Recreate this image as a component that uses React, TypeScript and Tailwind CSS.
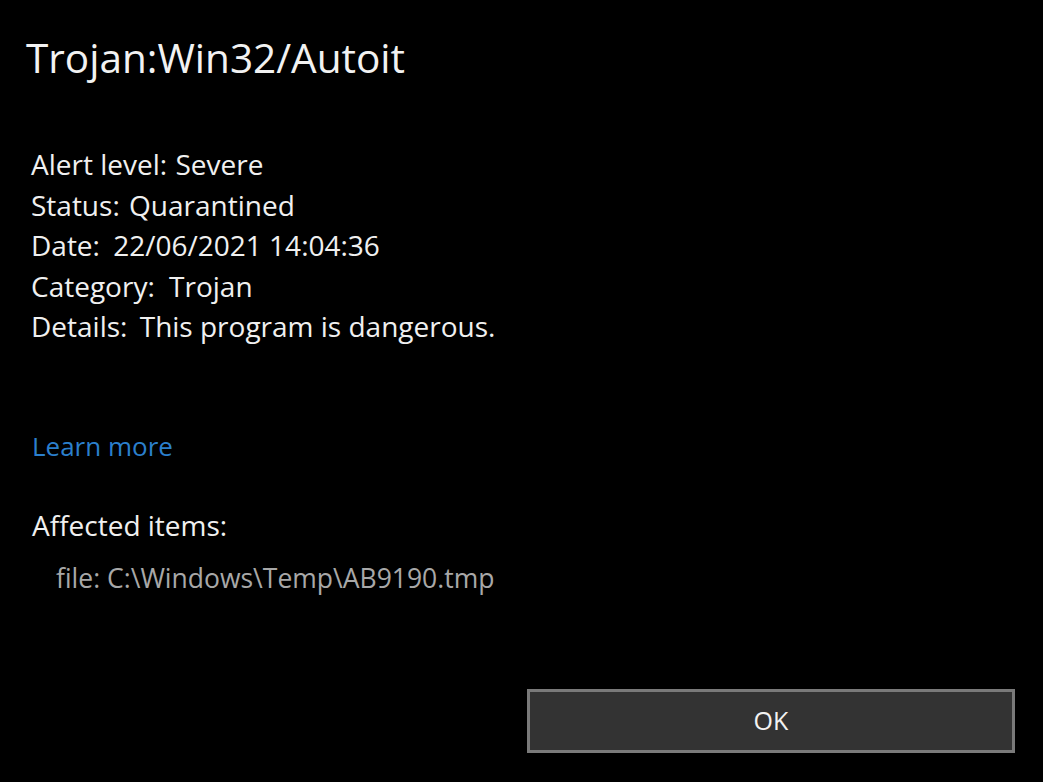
export default function App() {
  // label, value, gap after colon (px)
  const rows: [string, string, number][] = [
    ["Alert level:", "Severe", 1],
    ["Status:", "Quarantined", 2],
    ["Date:", "22/06/2021 14:04:36", 6],
    ["Category:", "Trojan", 7],
    ["Details:", "This program is dangerous.", 5],
  ];

  return (
    <main
      className="flex h-[782px] w-[1043px] flex-col bg-black text-white"
      style={{ fontFamily: '"Open Sans", "Noto Sans", sans-serif' }}
    >
      <h1 className="ml-[26px] mt-[32px] text-[40.5px] leading-[52px] text-[#f2f2f2]">
        Trojan:Win32/Autoit
      </h1>

      <div className="ml-[31px] mt-[60px] flex flex-col text-[28px] leading-[40.6px] text-[#f0f0f0]">
        {rows.map(([label, value, gap]) => (
          <div key={label} className="whitespace-nowrap">
            {label}{" "}
            <span style={{ marginLeft: gap }}>{value}</span>
          </div>
        ))}
      </div>

      <a className="ml-[32px] mt-[79px] text-[26px] leading-[40px] text-[#2b7fcc]">
        Learn more
      </a>

      <div className="ml-[32px] mt-[39px] text-[28px] leading-[40px] text-[#f0f0f0]">
        Affected items:
      </div>
      <div className="ml-[56px] mt-[13px] text-[26.5px] leading-[40px] text-[#a8a8a8]">
        file: C:\Windows\Temp\AB9190.tmp
      </div>

      <div className="mt-auto mb-[29px] mr-[28px] flex justify-end">
        <button className="h-[64px] w-[488px] border-[3px] border-[#7a7a7a] bg-[#333333] text-[25px] text-[#f2f2f2]">
          OK
        </button>
      </div>
    </main>
  );
}
